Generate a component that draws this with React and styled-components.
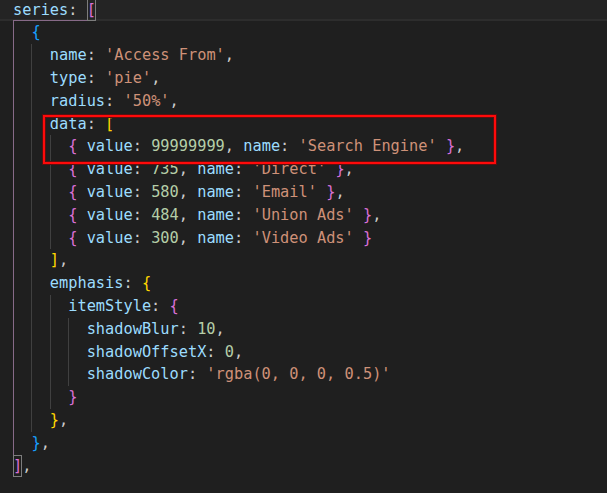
import React from "react";
import styled, { createGlobalStyle } from "styled-components";

const GlobalStyle = createGlobalStyle`
html, body { margin: 0; padding: 0; background: #1f1f1f; }
body { width: 607px; height: 493px; overflow: hidden; }
`

const colors = {
    key: "#9cdcfe",
    str: "#ce9178",
    num: "#b5cea8",
    punct: "#cccccc",
    gold: "#ffd700",
    orchid: "#da70d6",
    blue: "#179fff",
};

const ACTIVE_GUIDE = "#876a88";

const Page = styled.div`
position: relative;
width: 607px;
height: 493px;
overflow: hidden;
background: #1f1f1f;
`

const Editor = styled.div`
margin-top: -1.4px;
padding-left: 13px;
font-family: "DejaVu Sans Mono", "Liberation Mono", monospace;
font-size: 15.3px;
`

const Line = styled.div`
display: flex;
height: 22.8px;
line-height: 22.8px;
margin-left: -13px;
padding-left: 13px;
background: ${({ $current }) => $current ? "#242424" : "transparent"};
box-shadow: ${({ $current }) => $current ? "inset 0 -2px 0 #2d2d2d" : "none"};
`

const Guide = styled.span`
flex: none;
width: 2ch;
box-shadow: inset 1px 0 0 ${({ $active }) => $active ? ACTIVE_GUIDE : "#404040"};
`

const Code = styled.span`
display: flex;
white-space: pre;
`

const Token = styled.span`
color: ${({ $type }) => colors[$type]};
`

const GuideLead = styled.span`
box-shadow: inset 0 -1px 0 ${ACTIVE_GUIDE};
`

const Bracket = styled.span`
color: ${({ $color }) => colors[$color]};
box-shadow: ${({ $boxed }) => $boxed ? "inset 0 0 0 1px #7d7d7d" : "none"};
`

const Annotation = styled.div`
position: absolute;
left: 43px;
top: 115px;
width: 449px;
height: 45px;
border: 2px solid #ff0a0a;
box-shadow: 0 0 0 1px #5a1010, inset 0 0 0 1px #5a1010;
pointer-events: none;
`

const k = (t) => ["key", t];
const s = (t) => ["str", t];
const n = (t) => ["num", t];
const p = (t) => ["punct", t];
const b = (t, c, boxed) => ["bracket", t, c, boxed];

const item = (value, name, last) => [
    b("{", "orchid"), p(" "), k("value"), p(": "), n(value), p(", "),
    k("name"), p(": "), s(`'${name}'`), p(" "), b("}", "orchid"),
    ...(last ? [] : [p(",")]),
];

const lines = [
    { indent: 0, lead: true, tokens: [b("[", "orchid", true)] },
    { indent: 1, tokens: [b("{", "blue")] },
    { indent: 2, tokens: [k("name"), p(": "), s("'Access From'"), p(",")] },
    { indent: 2, tokens: [k("type"), p(": "), s("'pie'"), p(",")] },
    { indent: 2, tokens: [k("radius"), p(": "), s("'50%'"), p(",")] },
    { indent: 2, tokens: [k("data"), p(": "), b("[", "gold")] },
    { indent: 3, tokens: item("99999999", "Search Engine") },
    { indent: 3, tokens: item("735", "Direct") },
    { indent: 3, tokens: item("580", "Email") },
    { indent: 3, tokens: item("484", "Union Ads") },
    { indent: 3, tokens: item("300", "Video Ads", true) },
    { indent: 2, tokens: [b("]", "gold"), p(",")] },
    { indent: 2, tokens: [k("emphasis"), p(": "), b("{", "gold")] },
    { indent: 3, tokens: [k("itemStyle"), p(": "), b("{", "orchid")] },
    { indent: 4, tokens: [k("shadowBlur"), p(": "), n("10"), p(",")] },
    { indent: 4, tokens: [k("shadowOffsetX"), p(": "), n("0"), p(",")] },
    { indent: 4, tokens: [k("shadowColor"), p(": "), s("'rgba(0, 0, 0, 0.5)'")] },
    { indent: 3, tokens: [b("}", "orchid")] },
    { indent: 2, tokens: [b("}", "gold"), p(",")] },
    { indent: 1, tokens: [b("}", "blue"), p(",")] },
    { indent: 0, tokens: [b("]", "orchid", true), p(",")] },
];

const renderToken = ([type, text, color, boxed], i) => type === "bracket"
    ? <Bracket key={i} $color={color} $boxed={boxed}>{text}</Bracket>
    : <Token key={i} $type={type}>{text}</Token>;

const App = () => (
    <Page>
        <GlobalStyle />
        <Editor>
            {lines.map(({ indent, lead, tokens }, row) => (
                <Line key={row} $current={row === 0}>
                    {Array.from({ length: indent }, (_, level) => (
                        <Guide key={level} $active={level === 0} />
                    ))}
                    <Code>
                        {lead && <GuideLead><Token $type="key">series</Token><Token $type="punct">: </Token></GuideLead>}
                        {tokens.map(renderToken)}
                    </Code>
                </Line>
            ))}
        </Editor>
        <Annotation />
    </Page>
);

export default App;
